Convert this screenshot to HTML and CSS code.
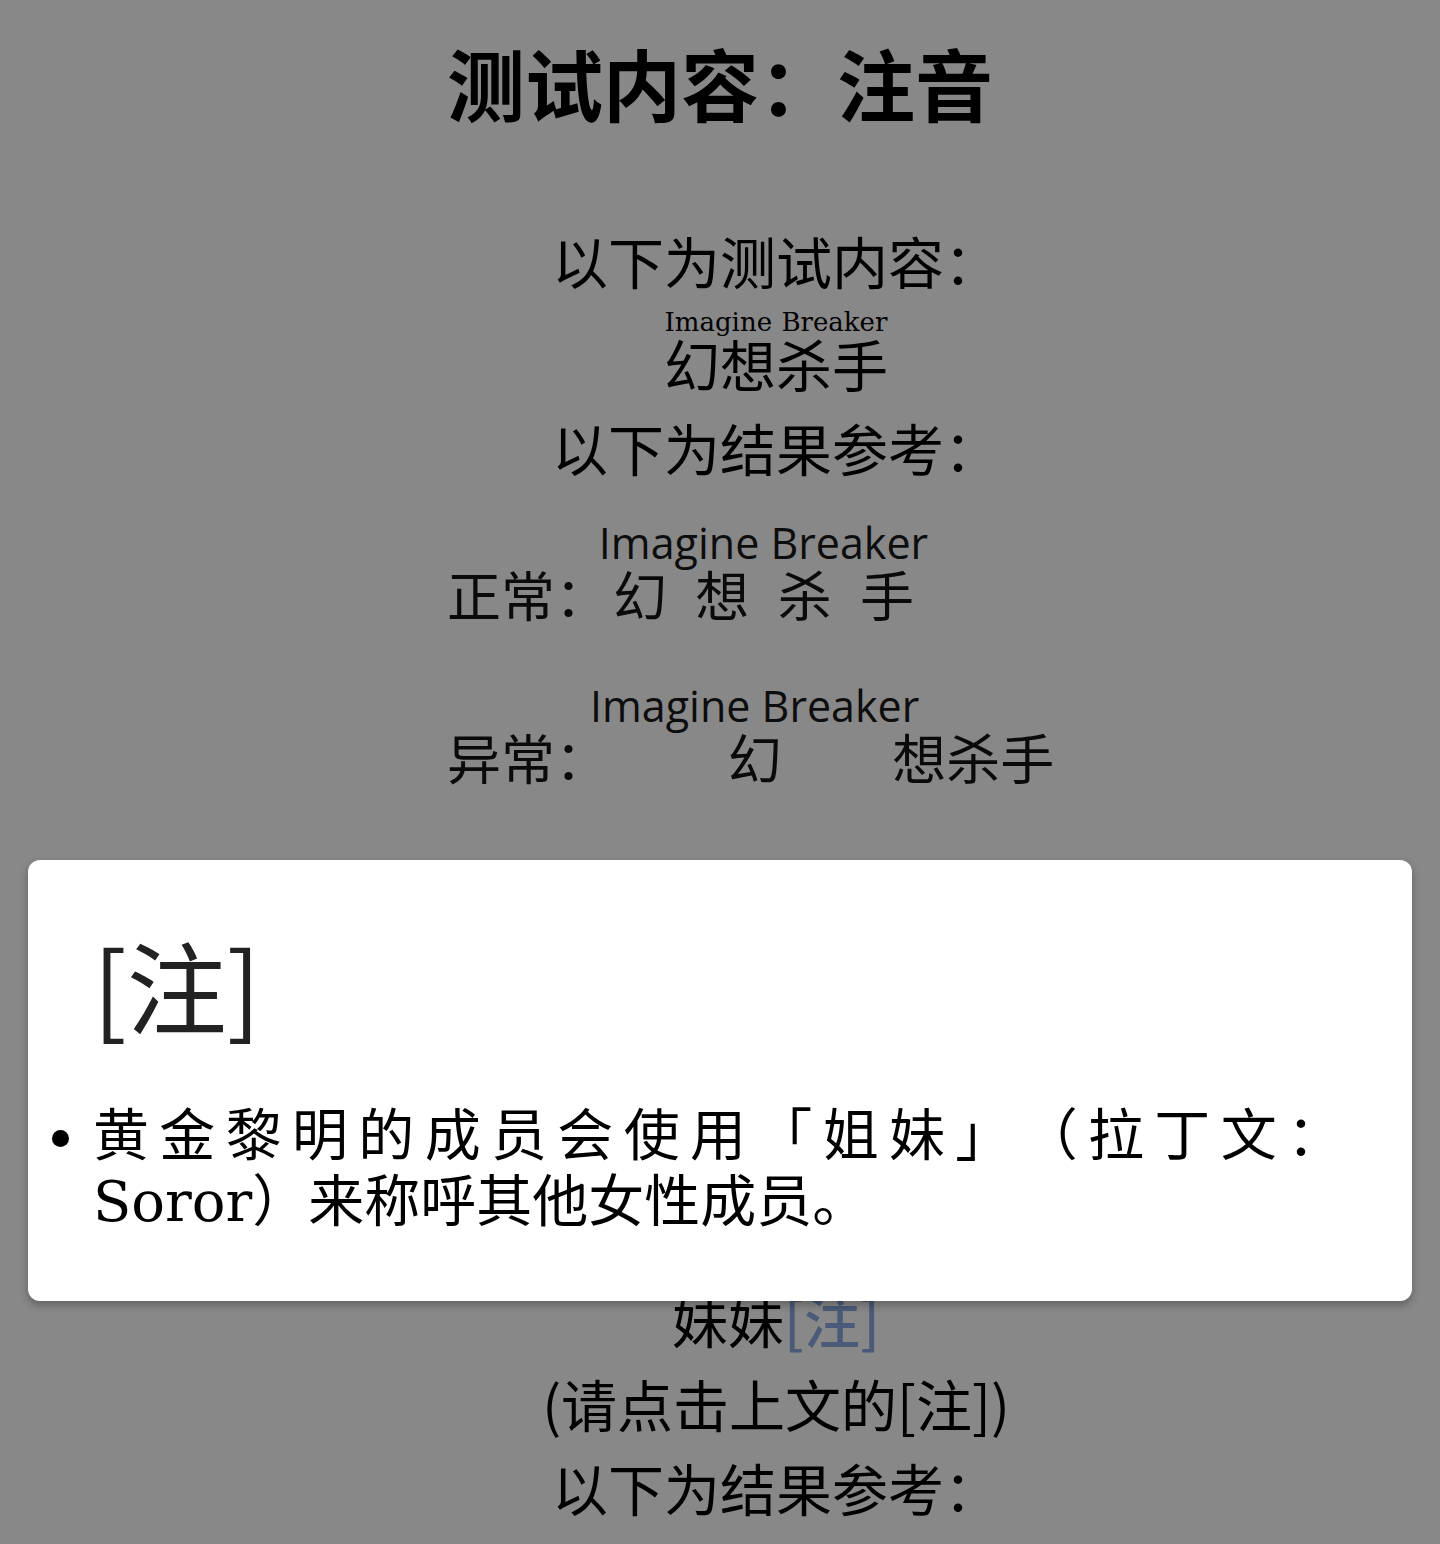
FILE: index.html
```html
<!DOCTYPE html>
<html>
<head>
    <title>测试内容：注音</title>
    <link rel="stylesheet" href="styles.css">
</head>
<body>

    <h1 class="title">测试内容：注音</h1>

    <!-- Ruby test -->
    <div class="page">
        <p>以下为测试内容：</p>
        <p class="ruby-line"><ruby>幻想杀手<rt>Imagine Breaker</rt></ruby></p>
        <p>以下为结果参考：</p>

        <!-- Reference rendering -->
        <div class="shot">
            <div class="shot-row">正常：<ruby class="good">幻想杀手<rt>Imagine Breaker</rt></ruby></div>
            <div class="shot-row">异常：<ruby class="bad">幻<rt>Imagine Breaker</rt></ruby>想杀手</div>
        </div>

        <p>以下为测试内容：</p>
        <p>妹妹<a class="note-link" href="#note">[注]</a></p>
        <p>(请点击上文的[注])</p>
        <p>以下为结果参考：</p>
    </div>

    <!-- Footnote popup -->
    <div class="dim"></div>
    <div class="note" id="note">
        <div class="note-head">[注]</div>
        <ul class="note-list">
            <li>黄金黎明的成员会使用「姐妹」（拉丁文：Soror）来称呼其他女性成员。</li>
        </ul>
    </div>

</body>
</html>
```

FILE: styles.css
```css
body {
    margin: 0;
    background: white;
    color: black;
    font-family: "Noto Sans CJK SC", sans-serif;
    font-size: 56px;
    text-spacing-trim: space-all;
}
.title {
    font-size: 78px;
    font-weight: 700;
    line-height: 94px;
    margin: 35px 0 0;
    text-align: center;
}
.page p {
    margin: 0;
    line-height: 84px;
    text-align: center;
    text-indent: 2em;
}
.page p:first-child {
    margin-top: 89px;
}
.page p.ruby-line {
    margin-top: 9px;
}
.ruby-line rt {
    font-family: "DejaVu Serif", serif;
    font-size: 26px;
    line-height: 1;
}
.note-link {
    color: #8ba9e1;
    font-weight: 500;
    text-decoration: none;
}

/* picture of the expected result */
.shot {
    width: 680px;
    margin: 36px auto 396px;
    padding-left: 67px;
    box-sizing: border-box;
    font-size: 54px;
    color: #141414;
}
.shot-row {
    line-height: 80px;
    margin-bottom: 54px;
    white-space: nowrap;
}
.shot rt {
    font-family: "Open Sans", sans-serif;
    font-size: 43px;
    line-height: 0.5;
    color: #1a1a1a;
}
.shot .good {
    margin-left: 4px;
}
.shot .bad {
    margin: 0 -6px 0 2px;
}

/* overlay + footnote */
.dim {
    position: fixed;
    top: 0;
    left: 0;
    right: 0;
    bottom: 0;
    background: rgba(0, 0, 0, 0.467);
}
.note {
    position: fixed;
    left: 28px;
    top: 860px;
    width: 1384px;
    box-sizing: border-box;
    padding: 64px 69px 66px 65px;
    background: white;
    border-radius: 12px;
    box-shadow: 0 4px 10px rgba(0, 0, 0, 0.3);
}
.note-head {
    font-size: 100px;
    line-height: 120px;
    color: #222;
}
.note-list {
    margin: 59px 0 0;
    padding: 0;
    list-style: disc outside;
    font-family: "DejaVu Serif", "Noto Sans CJK SC", serif;
    font-size: 56px;
    line-height: 66px;
    text-align: justify;
    color: black;
}
```
